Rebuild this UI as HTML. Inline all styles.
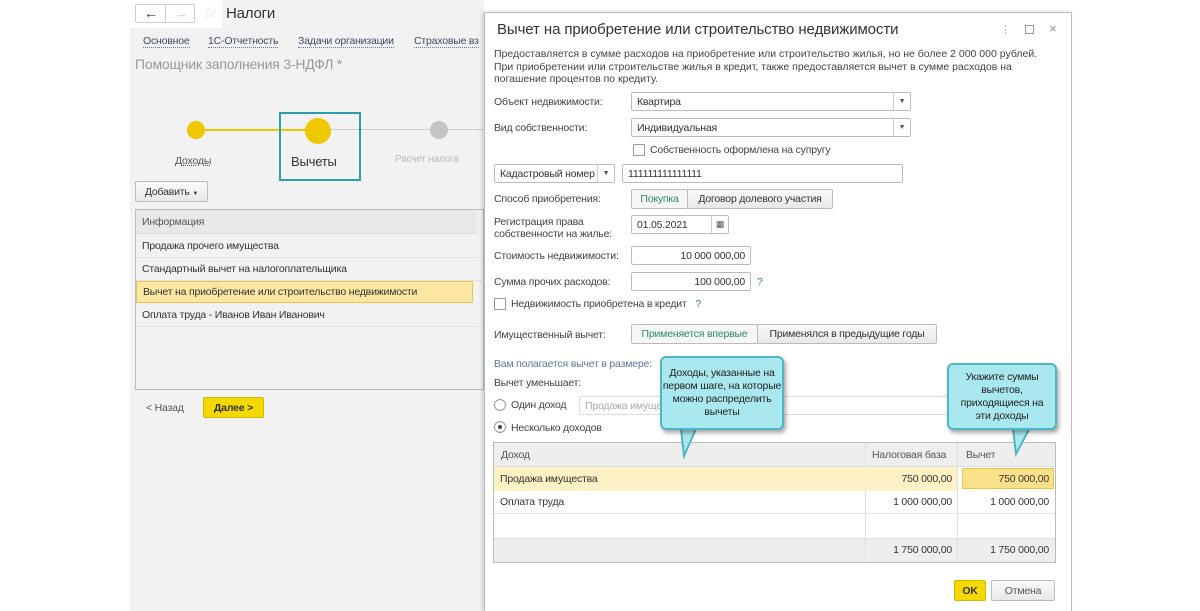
<!DOCTYPE html>
<html><head><meta charset="utf-8"><style>
*{box-sizing:border-box;margin:0;padding:0}
body{width:1200px;height:611px;position:relative;background:#fff;font-family:"Liberation Sans",Arial,sans-serif;font-size:10.5px;letter-spacing:-0.2px;color:#333;overflow:hidden;white-space:nowrap}
.a{position:absolute}
.lnk{color:#3d4a66;border-bottom:1px dotted #6b7a99}
.inp{position:absolute;background:#fff;border:1px solid #bbb;border-radius:2px;height:19px;padding:3px 5px;overflow:hidden}
.dd{position:absolute;right:0;top:0;width:17px;height:17px;border-left:1px solid #ccc;text-align:center;font-size:7px;line-height:17px;color:#555;background:#fff}
.btn{position:absolute;border:1px solid #bbb;border-radius:2px;height:20px;background:linear-gradient(#fafafa,#e8e8e8);padding:3px 7px;color:#333;text-align:center}
.cb{position:absolute;width:12px;height:12px;border:1px solid #999;background:#fff;border-radius:1px}
.tip{position:absolute;background:#a9e8ee;border:2px solid #4fb7c3;border-radius:6px;box-shadow:2px 3px 4px rgba(0,0,0,.35);text-align:center;font-size:10.5px;color:#222;line-height:13px;letter-spacing:-0.2px}
</style></head><body>
<div class="a" style="left:130px;top:0;width:354px;height:611px;background:#f2f2f2"></div>
<div class="a" style="left:130px;top:0;width:92px;height:28px;background:#fff"></div>
<div class="a" style="left:135px;top:4px;width:60px;height:19px;border:1px solid #ccc;border-radius:2px;background:#fff"></div>
<div class="a" style="left:165px;top:4px;width:1px;height:19px;background:#ccc"></div>
<div class="a" style="left:144px;top:5px;font-size:14px;color:#333">&#8592;</div>
<div class="a" style="left:174px;top:5px;font-size:14px;color:#ccc">&#8594;</div>
<div class="a" style="left:203px;top:3px;font-size:16px;color:#ddd">&#9734;</div>
<div class="a" style="left:226px;top:5px;font-size:15px;color:#333">Налоги</div>
<div class="a" style="left:143px;top:35px"><span class="lnk">Основное</span></div>
<div class="a" style="left:208px;top:35px"><span class="lnk">1С-Отчетность</span></div>
<div class="a" style="left:298px;top:35px"><span class="lnk">Задачи организации</span></div>
<div class="a" style="left:414px;top:35px"><span class="lnk">Страховые вз</span></div>
<div class="a" style="left:135px;top:56px;font-size:14px;color:#999">Помощник заполнения 3-НДФЛ *</div>
<div class="a" style="left:196px;top:129px;width:122px;height:2px;background:#f0c800"></div>
<div class="a" style="left:318px;top:129px;width:166px;height:1px;background:#ccc"></div>
<div class="a" style="left:187px;top:121px;width:18px;height:18px;border-radius:50%;background:#f0c800"></div>
<div class="a" style="left:305px;top:118px;width:26px;height:26px;border-radius:50%;background:#f0c800"></div>
<div class="a" style="left:430px;top:121px;width:18px;height:18px;border-radius:50%;background:#c4c6c4"></div>
<div class="a" style="left:279px;top:112px;width:82px;height:69px;border:2px solid #2a9eae"></div>
<div class="a" style="left:175px;top:155px;color:#555;text-decoration:underline dotted">Доходы</div>
<div class="a" style="left:291px;top:154px;font-size:13px;color:#333">Вычеты</div>
<div class="a" style="left:395px;top:154px;font-size:10px;color:#bbb">Расчет налога</div>
<div class="btn" style="left:135px;top:181px;width:73px;height:21px;padding:4px 4px">Добавить <span style="font-size:6px">&#9660;</span></div>
<div class="a" style="left:135px;top:209px;width:349px;height:181px;border:1px solid #bbb;background:#f2f2f2"></div>
<div class="a" style="left:136px;top:210px;width:341px;height:24px;background:#e8e8e8;border-bottom:1px solid #ddd;padding:6px 6px;color:#555">Информация</div>
<div class="a" style="left:136px;top:235px;width:348px;height:23px;border-bottom:1px solid #e3e3e3;padding:5px 6px">Продажа прочего имущества</div>
<div class="a" style="left:136px;top:258px;width:348px;height:23px;border-bottom:1px solid #e3e3e3;padding:5px 6px">Стандартный вычет на налогоплательщика</div>
<div class="a" style="left:136px;top:281px;width:337px;height:22px;background:#fbe7a2;border:1px solid #e6c84a;padding:4px 6px">Вычет на приобретение или строительство недвижимости</div>
<div class="a" style="left:136px;top:304px;width:348px;height:23px;border-bottom:1px solid #e3e3e3;padding:5px 6px">Оплата труда - Иванов Иван Иванович</div>
<div class="a" style="left:146px;top:402px;color:#555">&lt; Назад</div>
<div class="a" style="left:203px;top:397px;width:61px;height:21px;background:#f5d800;border:1px solid #d4b800;border-radius:2px;text-align:center;padding-top:4px;font-weight:bold;color:#333">Далее &gt;</div>

<div class="a" style="left:484px;top:12px;width:588px;height:599px;background:#fff;border:1px solid #bbb;border-bottom:none;box-shadow:-2px 0 4px rgba(0,0,0,.15)"></div>
<div class="a" style="left:497px;top:21px;font-size:15px;color:#333;letter-spacing:-0.1px">Вычет на приобретение или строительство недвижимости</div>
<div class="a" style="left:1000px;top:23px;color:#aaa;font-size:11px">&#8942;</div>
<div class="a" style="left:1025px;top:25px;width:9px;height:9px;border:1px solid #999"></div>
<div class="a" style="left:1049px;top:21px;color:#999;font-size:13px">&#215;</div>
<div class="a" style="left:494px;top:48px;font-size:10.5px;line-height:12.5px;color:#444;letter-spacing:0">Предоставляется в сумме расходов на приобретение или строительство жилья, но не более 2 000 000 рублей.<br>При приобретении или строительстве жилья в кредит, также предоставляется вычет в сумме расходов на<br>погашение процентов по кредиту.</div>
<div class="a" style="left:494px;top:96px;color:#444">Объект недвижимости:</div>
<div class="inp" style="left:631px;top:92px;width:280px">Квартира<div class="dd">&#9660;</div></div>
<div class="a" style="left:494px;top:122px;color:#444">Вид собственности:</div>
<div class="inp" style="left:631px;top:118px;width:280px">Индивидуальная<div class="dd">&#9660;</div></div>
<div class="cb" style="left:633px;top:144px"></div>
<div class="a" style="left:650px;top:144px;color:#444">Собственность оформлена на супругу</div>
<div class="inp" style="left:494px;top:164px;width:121px">Кадастровый номер<div class="dd">&#9660;</div></div>
<div class="inp" style="left:622px;top:164px;width:281px">111111111111111</div>
<div class="a" style="left:494px;top:193px;color:#444">Способ приобретения:</div>
<div class="btn" style="left:631px;top:189px;width:57px;background:#f6f6f6;color:#2a8a6a;padding:3px 2px">Покупка</div>
<div class="btn" style="left:687px;top:189px;width:146px;padding:3px 2px">Договор долевого участия</div>
<div class="a" style="left:494px;top:216px;color:#444;line-height:12px">Регистрация права<br>собственности на жилье:</div>
<div class="inp" style="left:631px;top:215px;width:98px">01.05.2021<div class="dd" style="font-size:9px">&#9638;</div></div>
<div class="a" style="left:494px;top:250px;color:#444">Стоимость недвижимости:</div>
<div class="inp" style="left:631px;top:246px;width:120px;text-align:right">10 000 000,00</div>
<div class="a" style="left:494px;top:276px;color:#444">Сумма прочих расходов:</div>
<div class="inp" style="left:631px;top:272px;width:120px;text-align:right">100 000,00</div>
<div class="a" style="left:757px;top:276px;color:#2a8a6a">?</div>
<div class="cb" style="left:494px;top:298px"></div>
<div class="a" style="left:511px;top:298px;color:#444">Недвижимость приобретена в кредит <span style="color:#2a8a6a;margin-left:6px">?</span></div>
<div class="a" style="left:494px;top:329px;color:#444">Имущественный вычет:</div>
<div class="btn" style="left:631px;top:324px;width:127px;background:#f6f6f6;color:#2a8a6a;padding:3px 2px">Применяется впервые</div>
<div class="btn" style="left:757px;top:324px;width:180px;padding:3px 2px">Применялся в предыдущие годы</div>
<div class="a" style="left:494px;top:358px;color:#5a7a9a">Вам полагается вычет в размере:</div>
<div class="a" style="left:494px;top:377px;color:#444">Вычет уменьшает:</div>
<div class="a" style="left:494px;top:399px;width:12px;height:12px;border:1px solid #999;border-radius:50%"></div>
<div class="a" style="left:511px;top:399px;color:#444">Один доход</div>
<div class="inp" style="left:579px;top:396px;width:475px;color:#aaa;border-color:#ddd">Продажа имущества</div>
<div class="a" style="left:494px;top:421px;width:12px;height:12px;border:1px solid #999;border-radius:50%"><div style="width:4px;height:4px;background:#444;border-radius:50%;margin:3px"></div></div>
<div class="a" style="left:511px;top:422px;color:#444">Несколько доходов</div>

<div class="a" style="left:493px;top:442px;width:563px;height:121px;border:1px solid #bbb"></div>
<div class="a" style="left:494px;top:443px;width:561px;height:24px;background:#eee;border-bottom:1px solid #ddd"></div>
<div class="a" style="left:501px;top:449px;color:#555">Доход</div>
<div class="a" style="left:865px;top:443px;width:1px;height:119px;background:#ddd"></div>
<div class="a" style="left:957px;top:443px;width:1px;height:119px;background:#ddd"></div>
<div class="a" style="left:872px;top:449px;color:#555">Налоговая база</div>
<div class="a" style="left:966px;top:449px;color:#555">Вычет</div>
<div class="a" style="left:494px;top:467px;width:463px;height:24px;background:#fdf1c6"></div>
<div class="a" style="left:500px;top:473px">Продажа имущества</div>
<div class="a" style="left:872px;top:473px;width:80px;text-align:right">750 000,00</div>
<div class="a" style="left:962px;top:468px;width:92px;height:21px;background:#fbe28a;border:1px solid #e8c84a;text-align:right;padding:4px 4px">750 000,00</div>
<div class="a" style="left:494px;top:491px;width:561px;height:23px;border-bottom:1px solid #e6e6e6"></div>
<div class="a" style="left:500px;top:496px">Оплата труда</div>
<div class="a" style="left:872px;top:496px;width:80px;text-align:right">1 000 000,00</div>
<div class="a" style="left:962px;top:496px;width:87px;text-align:right">1 000 000,00</div>
<div class="a" style="left:494px;top:538px;width:561px;height:24px;background:#eee;border-top:1px solid #ddd"></div>
<div class="a" style="left:865px;top:538px;width:1px;height:24px;background:#ddd"></div>
<div class="a" style="left:957px;top:538px;width:1px;height:24px;background:#ddd"></div>
<div class="a" style="left:872px;top:544px;width:80px;text-align:right">1 750 000,00</div>
<div class="a" style="left:962px;top:544px;width:87px;text-align:right">1 750 000,00</div>
<div class="a" style="left:954px;top:580px;width:32px;height:21px;background:#f5d800;border:1px solid #d4b800;border-radius:2px;text-align:center;padding-top:4px;font-weight:bold">OK</div>
<div class="btn" style="left:991px;top:580px;width:64px;height:21px;color:#555;padding:4px 2px">Отмена</div>

<svg class="a" style="left:660px;top:420px" width="50" height="40"><polygon points="20,0 40,0 24,36" fill="#a9e8ee" stroke="#4fb7c3" stroke-width="2"/></svg>
<svg class="a" style="left:1000px;top:420px" width="50" height="40"><polygon points="12,0 34,0 16,34" fill="#a9e8ee" stroke="#4fb7c3" stroke-width="2"/></svg>
<div class="tip" style="left:660px;top:356px;width:124px;height:74px;padding-top:9px">Доходы, указанные на<br>первом шаге, на которые<br>можно распределить<br>вычеты</div>
<div class="tip" style="left:947px;top:363px;width:110px;height:67px;padding-top:6px">Укажите суммы<br>вычетов,<br>приходящиеся на<br>эти доходы</div>
</body></html>
